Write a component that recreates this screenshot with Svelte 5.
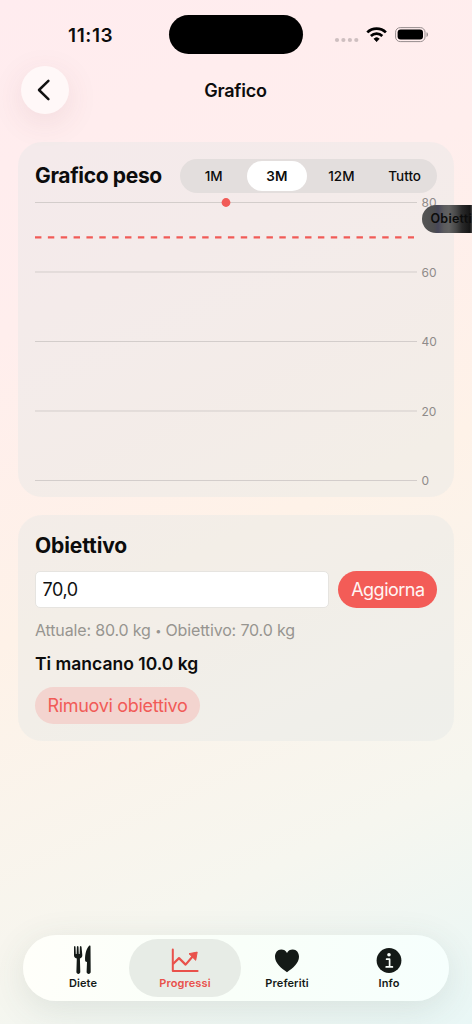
<script lang="ts">
	const ranges = ['1M', '3M', '12M', 'Tutto'];
	const ticks = [80, 60, 40, 20, 0];
	const tabs = ['Diete', 'Progressi', 'Preferiti', 'Info'];

	let range = $state('3M');
	let tab = $state('Progressi');
	let goal = $state('70,0');

	// vertical position of a weight inside the plot
	function yFor(kg: number) {
		return 9.5 + (80 - kg) * 3.475;
	}
</script>

<div class="screen">
	<div class="status-bar">
		<div class="time">11:13</div>
		<div class="island"></div>
		<svg class="indicators" width="96" height="20" viewBox="0 0 96 20">
			<g fill="#cebfc0">
				<circle cx="4" cy="15" r="2.1" />
				<circle cx="10.4" cy="15" r="2.1" />
				<circle cx="16.9" cy="15" r="2.1" />
				<circle cx="23.3" cy="15" r="2.1" />
			</g>
			<g fill="none" stroke="#000" stroke-width="2.7">
				<path d="M34.3 7.4a13.3 13.3 0 0 1 18.6 0" />
				<path d="M37.9 11a8.2 8.2 0 0 1 11.4 0" />
			</g>
			<path d="M40.9 13.8a4 4 0 0 1 5.4 0L43.6 16.7z" fill="#000" stroke="#000" stroke-width=".6" stroke-linejoin="round" />
			<rect x="62.6" y="2.6" width="29.4" height="14" rx="4.6" fill="none" stroke="#978d8e" />
			<rect x="64.6" y="4.6" width="25.4" height="10" rx="3" />
			<path d="M93.5 7.3c2 .6 2 4 0 4.6z" fill="#978d8e" />
		</svg>
	</div>

	<header class="nav-bar">
		<button class="back" aria-label="Indietro">
			<svg width="14" height="22" viewBox="0 0 14 22">
				<path d="M11.4 1.9 2 11l9.4 9.1" fill="none" stroke="#111" stroke-width="2.5" stroke-linecap="round" stroke-linejoin="round" />
			</svg>
		</button>
		<h1>Grafico</h1>
	</header>

	<main>
		<section class="card chart-card">
			<div class="card-header">
				<h2>Grafico peso</h2>
				<div class="segments">
					{#each ranges as r}
						<button class:active={range === r} onclick={() => (range = r)}>{r}</button>
					{/each}
				</div>
			</div>
			<div class="chart">
				<svg width="403" height="296" viewBox="0 0 403 296">
					{#each ticks as t}
						<line x1="0" x2="382" y1={yFor(t)} y2={yFor(t)} class="grid-line" />
						<text x="386.5" y={yFor(t) + 4.5}>{t}</text>
					{/each}
					<line x1="0" x2="379" y1={yFor(70) + 0.2} y2={yFor(70) + 0.2} class="goal-line" />
					<circle cx="191" cy={yFor(80)} r="4.4" fill="#f15b57" />
				</svg>
				<div class="goal-label">Obiettivo</div>
			</div>
		</section>

		<section class="card goal-card">
			<h2>Obiettivo</h2>
			<div class="goal-form">
				<input type="text" bind:value={goal} />
				<button class="update">Aggiorna</button>
			</div>
			<p class="summary">Attuale: 80.0 kg <span>•</span> Obiettivo: 70.0 kg</p>
			<p class="remaining">Ti mancano 10.0 kg</p>
			<button class="remove">Rimuovi obiettivo</button>
		</section>
	</main>

	<nav class="tab-bar">
		{#each tabs as t}
			<button class="tab" class:selected={tab === t} onclick={() => (tab = t)}>
				<svg width="30" height="30" viewBox="0 0 30 30" fill="currentColor">
					{#if t === 'Diete'}
						<path d="M6 1.7Q6.8.5 7.5 1.7L7.8 9h.8L8.9 1.7q.8-1.2 1.6 0L10.8 9h.8l.3-7.3q.8-1.2 1.6 0l.8 8.2c.2 2-.9 2.9-2.4 3.6l.4 13.3c.1 2.8-4 2.8-3.9 0l.4-13.3c-1.9-.7-3-1.7-2.8-3.6z" />
						<path d="M22.5 1.5c.2-.9-.7-1.2-1.5-.5-2.6 2.4-4.1 8.3-3.9 14.2 0 1.2.6 1.5 1.9 1.8l-.4 9.8c-.1 2.8 4.2 2.8 4.1 0z" />
					{:else if t === 'Progressi'}
						<path d="M2.8 4.5v21.6h24.8" fill="none" stroke="currentColor" stroke-width="2" stroke-linecap="round" stroke-linejoin="round" />
						<path d="M3 19l6-5.9 6.6 6.5 7.2-8.4" fill="none" stroke="currentColor" stroke-width="2.2" stroke-linejoin="round" />
						<path d="M19 8.7l8.2-1.6-1.5 8.2z" stroke="currentColor" stroke-width="1" stroke-linejoin="round" />
					{:else if t === 'Preferiti'}
						<path d="M15 27.2C9 23.3 3 17.9 3 11.8 3 7.6 5.5 4.5 9.2 4.5c2.6 0 4.7 1.2 5.8 3.4 1.1-2.2 3.2-3.4 5.8-3.4 3.7 0 6.2 3.1 6.2 7.3 0 6.1-6 11.5-12 15.4z" />
					{:else}
						<circle cx="15" cy="15.5" r="12.4" />
						<circle cx="15" cy="9.8" r="1.8" fill="#f9fffb" />
						<path d="M12.6 14.2h3v7.5M12.2 21.9h6.2" fill="none" stroke="#f9fffb" stroke-width="1.7" stroke-linecap="round" stroke-linejoin="round" />
					{/if}
				</svg>
				<span>{t}</span>
			</button>
		{/each}
	</nav>
</div>

<style>
	:global(body) {
		margin: 0;
	}

	.screen {
		width: 472px;
		height: 1024px;
		display: flex;
		flex-direction: column;
		overflow: hidden;
		box-sizing: border-box;
		background: linear-gradient(155.3deg, #ffecef 0%, #ffeeed 27%, #fef2e8 52%, #f6f6ef 80%, #e9f7f6 100%);
		font-family: Inter, 'Liberation Sans', sans-serif;
		color: #0c0c0c;
	}

	button {
		border: none;
		padding: 0;
		font-family: inherit;
		color: inherit;
		background: none;
	}

	h1,
	h2,
	p {
		margin: 0;
	}

	.status-bar {
		height: 66px;
		display: grid;
		grid-template-columns: 169px 134px 1fr;
		align-items: start;
		padding-top: 15px;
		box-sizing: border-box;
		flex: none;
	}

	.time {
		padding: 9px 0 0 68px;
		font-size: 19px;
		line-height: 23px;
		font-weight: 600;
		letter-spacing: 0.6px;
	}

	.island {
		height: 39px;
		border-radius: 20px;
		background: #000;
	}

	.indicators {
		margin: 10px 0 0 30px;
	}

	.nav-bar {
		height: 48px;
		display: grid;
		grid-template-columns: 48px 1fr 48px;
		align-items: center;
		padding: 0 22px 0 21px;
		flex: none;
	}

	.back {
		width: 48px;
		height: 48px;
		border-radius: 50%;
		display: flex;
		align-items: center;
		justify-content: center;
		padding-right: 3px;
		box-sizing: border-box;
		background: #fff8f8;
		box-shadow: 0 8px 32px rgba(120, 60, 70, 0.1);
	}

	h1 {
		padding-top: 2px;
		text-align: center;
		font-size: 18px;
		line-height: 24px;
		font-weight: 600;
		letter-spacing: -0.2px;
	}

	main {
		flex: 1;
		padding: 28px 18px 0;
	}

	.card {
		border-radius: 24px;
		box-sizing: border-box;
		padding: 17px;
		background: rgba(224, 229, 230, 0.36);
	}

	.chart-card {
		height: 355px;
		margin-bottom: 18px;
	}

	.goal-card {
		height: 226px;
	}

	.card-header {
		height: 34px;
		display: flex;
		align-items: center;
		justify-content: space-between;
	}

	h2 {
		font-size: 21px;
		line-height: 26px;
		font-weight: 700;
		letter-spacing: -0.35px;
		white-space: nowrap;
	}

	.goal-card h2 {
		padding-top: 1px;
		letter-spacing: -0.1px;
	}

	.segments {
		width: 257px;
		height: 34px;
		margin-right: -0.4px;
		padding: 2px;
		box-sizing: border-box;
		border-radius: 17px;
		display: grid;
		grid-template-columns: 62.5px 64px 65px 1fr;
		background: #e3dedd;
	}

	.segments button {
		margin: 0 2px;
		border-radius: 15px;
		font-size: 13.5px;
		font-weight: 500;
	}

	.segments .active {
		background: #fff;
		font-weight: 600;
	}

	.chart {
		position: relative;
	}

	.chart svg {
		display: block;
	}

	.chart text {
		font-size: 12px;
		fill: #8f8b8a;
	}

	.grid-line {
		stroke: #d3cdcb;
		stroke-width: 1;
	}

	.goal-line {
		stroke: #f15b57;
		stroke-width: 2.2;
		stroke-dasharray: 6.43 6.43;
	}

	.goal-label {
		position: absolute;
		left: 387px;
		top: 12px;
		width: 76px;
		height: 28px;
		padding-left: 8.5px;
		box-sizing: border-box;
		border-radius: 14px;
		font-size: 12.5px;
		line-height: 28px;
		font-weight: 600;
		letter-spacing: 0.25px;
		background: linear-gradient(90deg, #555 0, #4d4d4f 12px, #47475a 16px, #5c5c5e 22px, #626262 27px, #484848 34px, #292929 40px, #151515 48px, #4a4a4a 50px);
	}

	.goal-form {
		display: flex;
		gap: 9px;
		margin: 12px -0.4px 0 -0.5px;
	}

	.goal-form input {
		flex: 1;
		min-width: 0;
		height: 37px;
		box-sizing: border-box;
		padding: 0 7px;
		border: 1px solid #e6e4e0;
		border-radius: 5px;
		background: #fff;
		font: 400 18px Inter, sans-serif;
		letter-spacing: -0.4px;
		color: #111;
	}

	.update {
		width: 99px;
		height: 37px;
		border-radius: 19px;
		background: #f35c57;
		color: #fff5f3;
		font-size: 18px;
		letter-spacing: -0.5px;
	}

	.summary {
		margin-top: 11px;
		font-size: 16px;
		line-height: 22px;
		letter-spacing: -0.15px;
		color: #979590;
	}

	.summary span {
		display: inline-block;
		width: 6px;
		font-size: 11px;
		line-height: 1;
		vertical-align: 1px;
	}

	.remaining {
		margin-top: 11px;
		font-size: 17.5px;
		line-height: 24px;
		font-weight: 600;
	}

	.remove {
		width: 165px;
		height: 36.5px;
		margin-top: 11px;
		border-radius: 18.5px;
		background: #f3d4cf;
		color: #f15b57;
		font-size: 18px;
		letter-spacing: -0.3px;
		white-space: nowrap;
	}

	.tab-bar {
		height: 66px;
		margin: 0 23px 23px;
		padding: 4px 9px;
		box-sizing: border-box;
		border-radius: 33px;
		display: grid;
		grid-template-columns: repeat(4, 1fr);
		background: linear-gradient(100deg, #fffffa, #f9fff9 50%, #f6fffd);
		box-shadow: 0 8px 36px rgba(60, 80, 70, 0.12);
		flex: none;
	}

	.tab {
		display: flex;
		flex-direction: column;
		align-items: center;
		margin: 0 -5px;
		padding-top: 6px;
		border-radius: 29px;
		color: #141a17;
	}

	.tab svg {
		display: block;
	}

	.tab span {
		font-size: 11px;
		line-height: 14px;
		font-weight: 600;
		margin-top: 1px;
		letter-spacing: 0.1px;
	}

	.tab.selected {
		background: #e7ece6;
		color: #e9514b;
	}
</style>
